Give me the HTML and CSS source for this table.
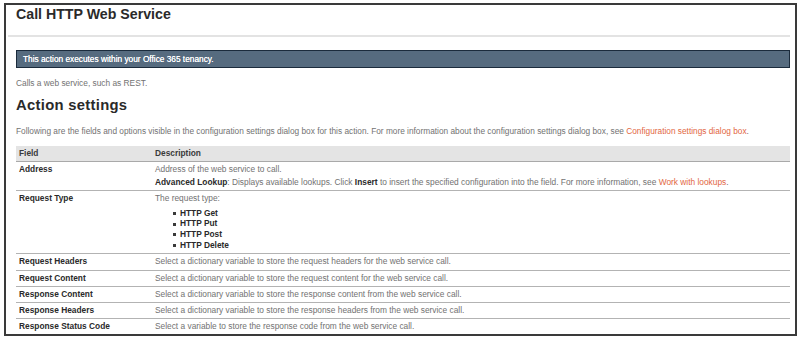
FILE: index.html
```html
<!DOCTYPE html>
<html lang="en">
<head>
    <meta charset="utf-8">
    <title>Call HTTP Web Service</title>
    <link rel="stylesheet" href="styles.css">
</head>
<body>

<div class="frame">
    <h1 class="page-title">Call HTTP Web Service</h1>
    <hr class="title-rule">

    <div class="content">
        <div class="tenancy-note">This action executes within your Office 365 tenancy.</div>

        <p class="intro">Calls a web service, such as REST.</p>

        <h2 class="section-title">Action settings</h2>
        <p class="section-text">Following are the fields and options visible in the configuration settings dialog box for this action. For more information about the configuration settings dialog box, see <a href="#">Configuration settings dialog box</a>.</p>

        <table class="settings-table">
            <thead>
                <tr>
                    <th class="col-field">Field</th>
                    <th>Description</th>
                </tr>
            </thead>
            <tbody>
                <tr>
                    <td class="field-name">Address</td>
                    <td>
                        <p>Address of the web service to call.</p>
                        <p class="follow"><strong>Advanced Lookup</strong>: Displays available lookups. Click <strong>Insert</strong> to insert the specified configuration into the field. For more information, see <a href="#">Work with lookups</a>.</p>
                    </td>
                </tr>
                <tr>
                    <td class="field-name">Request Type</td>
                    <td>
                        <p>The request type:</p>
                        <ul class="type-list">
                            <li>HTTP Get</li>
                            <li>HTTP Put</li>
                            <li>HTTP Post</li>
                            <li>HTTP Delete</li>
                        </ul>
                    </td>
                </tr>
                <tr>
                    <td class="field-name">Request Headers</td>
                    <td>Select a dictionary variable to store the request headers for the web service call.</td>
                </tr>
                <tr>
                    <td class="field-name">Request Content</td>
                    <td>Select a dictionary variable to store the request content for the web service call.</td>
                </tr>
                <tr>
                    <td class="field-name">Response Content</td>
                    <td>Select a dictionary variable to store the response content from the web service call.</td>
                </tr>
                <tr>
                    <td class="field-name">Response Headers</td>
                    <td>Select a dictionary variable to store the response headers from the web service call.</td>
                </tr>
                <tr>
                    <td class="field-name">Response Status Code</td>
                    <td>Select a variable to store the response code from the web service call.</td>
                </tr>
            </tbody>
        </table>
    </div>
</div>

</body>
</html>
```

FILE: styles.css
```css
body {
    margin: 0;
    padding: 0;
    background-color: #fff;
    font-family: "Liberation Sans", Arial, sans-serif;
    color: #727272;
}

.frame {
    box-sizing: border-box;
    width: 793px;
    height: 333px;
    margin: 3px 0 0 4px;
    border: 2px solid #3a3a3a;
    overflow: hidden;
    background-color: #fff;
}

.page-title {
    margin: 0;
    padding-left: 10px;
    font-size: 14.2px;
    line-height: 18px;
    font-weight: bold;
    color: #2a2a2a;
}

.title-rule {
    height: 2px;
    margin: 12px 5px 0 2px;
    border: none;
    background-color: #e3e3e3;
}

.content {
    padding: 0 5px 0 10px;
}

.tenancy-note {
    margin-top: 13px;
    height: 16px;
    padding-left: 6px;
    border: 1px solid #1b2b3c;
    background-color: #566b7f;
    color: #fff;
    font-size: 8.3px;
    line-height: 16px;
    text-shadow: 0 0 0.4px #fff;
}

.intro {
    margin: 10px 0 0;
    font-size: 8.35px;
    line-height: 10px;
}

.section-title {
    margin: 9px 0 0;
    font-size: 14.8px;
    line-height: 17px;
    letter-spacing: 0.3px;
    font-weight: bold;
    color: #2a2a2a;
}

.section-text {
    margin: 11.5px 0 0;
    font-size: 8.3px;
    line-height: 10px;
}

a {
    color: #e2673f;
    text-decoration: none;
}

.settings-table {
    width: 100%;
    margin-top: 10px;
    border-collapse: collapse;
    font-size: 8.35px;
    line-height: 9.25px;
}

.settings-table th {
    padding: 3px 3px;
    background-color: #e4e4e4;
    border-bottom: 1px solid #a9a9a9;
    text-align: left;
    font-weight: bold;
    color: #3a3a3a;
}

.col-field {
    width: 130px;
}

.settings-table td {
    padding: 3px 3px;
    border-bottom: 1px solid #b3b3b3;
    vertical-align: top;
}

.field-name {
    font-weight: bold;
    color: #2a2a2a;
}

.settings-table td p {
    margin: 0;
}

.settings-table td p.follow {
    margin-top: 4px;
}

.settings-table strong {
    color: #2a2a2a;
}

.type-list {
    margin: 4px 0 0;
    padding-left: 25px;
    list-style: none;
    line-height: 10.7px;
    font-weight: bold;
    color: #2a2a2a;
}

.type-list li::before {
    content: "";
    display: inline-block;
    width: 3px;
    height: 3px;
    margin: 0 4px 0 -7px;
    background-color: #3a3a3a;
    vertical-align: middle;
}
```
